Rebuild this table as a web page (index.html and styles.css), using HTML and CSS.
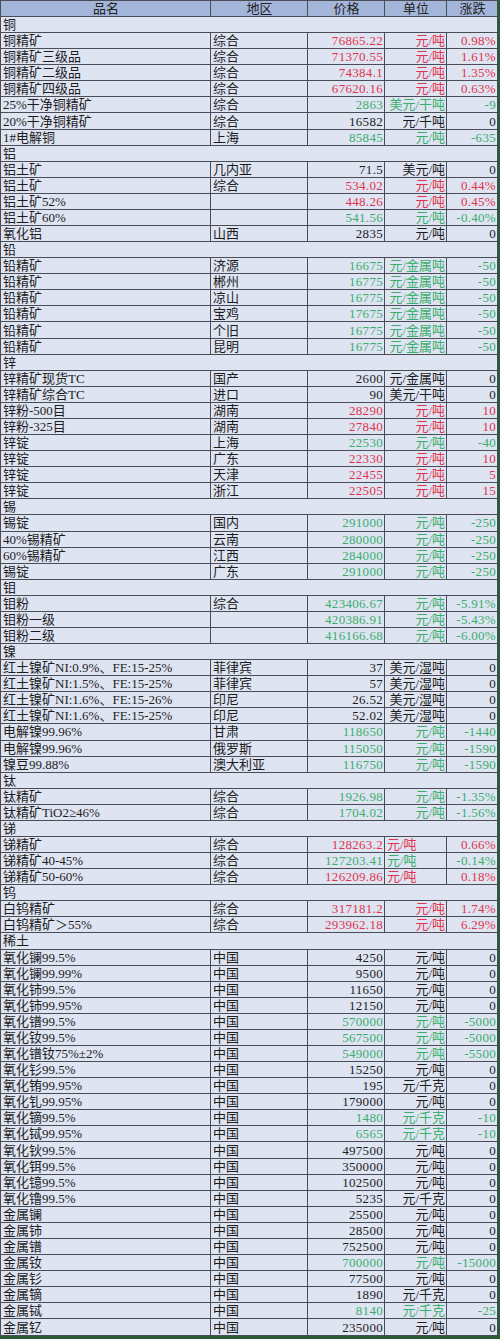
FILE: index.html
```html
<!DOCTYPE html>
<html lang="zh-CN">
<head>
<meta charset="utf-8">
<title>有色金属价格</title>
<link rel="stylesheet" href="styles.css">
</head>
<body>
<div class="sheet">
<table class="grid">
<colgroup><col class="c-name"><col class="c-area"><col class="c-price"><col class="c-unit"><col class="c-chg"></colgroup>
<thead>
<tr class="head"><th>品名</th><th>地区</th><th>价格</th><th>单位</th><th>涨跌</th></tr>
</thead>
<tbody>
<tr class="sec"><td colspan="5">铜</td></tr>
<tr class="up"><td>铜精矿</td><td>综合</td><td class="n">76865.22</td><td class="u">元/吨</td><td class="n">0.98%</td></tr>
<tr class="up"><td>铜精矿三级品</td><td>综合</td><td class="n">71370.55</td><td class="u">元/吨</td><td class="n">1.61%</td></tr>
<tr class="up"><td>铜精矿二级品</td><td>综合</td><td class="n">74384.1</td><td class="u">元/吨</td><td class="n">1.35%</td></tr>
<tr class="up"><td>铜精矿四级品</td><td>综合</td><td class="n">67620.16</td><td class="u">元/吨</td><td class="n">0.63%</td></tr>
<tr class="dn"><td>25%干净铜精矿</td><td>综合</td><td class="n">2863</td><td class="u">美元/干吨</td><td class="n">-9</td></tr>
<tr><td>20%干净铜精矿</td><td>综合</td><td class="n">16582</td><td class="u">元/千吨</td><td class="n">0</td></tr>
<tr class="dn"><td>1#电解铜</td><td>上海</td><td class="n">85845</td><td class="u">元/吨</td><td class="n">-635</td></tr>
<tr class="sec"><td colspan="5">铝</td></tr>
<tr><td>铝土矿</td><td>几内亚</td><td class="n">71.5</td><td class="u">美元/吨</td><td class="n">0</td></tr>
<tr class="up"><td>铝土矿</td><td>综合</td><td class="n">534.02</td><td class="u">元/吨</td><td class="n">0.44%</td></tr>
<tr class="up"><td>铝土矿52%</td><td></td><td class="n">448.26</td><td class="u">元/吨</td><td class="n">0.45%</td></tr>
<tr class="dn"><td>铝土矿60%</td><td></td><td class="n">541.56</td><td class="u">元/吨</td><td class="n">-0.40%</td></tr>
<tr><td>氧化铝</td><td>山西</td><td class="n">2835</td><td class="u">元/吨</td><td class="n">0</td></tr>
<tr class="sec"><td colspan="5">铅</td></tr>
<tr class="dn"><td>铅精矿</td><td>济源</td><td class="n">16675</td><td class="u">元/金属吨</td><td class="n">-50</td></tr>
<tr class="dn"><td>铅精矿</td><td>郴州</td><td class="n">16775</td><td class="u">元/金属吨</td><td class="n">-50</td></tr>
<tr class="dn"><td>铅精矿</td><td>凉山</td><td class="n">16775</td><td class="u">元/金属吨</td><td class="n">-50</td></tr>
<tr class="dn"><td>铅精矿</td><td>宝鸡</td><td class="n">17675</td><td class="u">元/金属吨</td><td class="n">-50</td></tr>
<tr class="dn"><td>铅精矿</td><td>个旧</td><td class="n">16775</td><td class="u">元/金属吨</td><td class="n">-50</td></tr>
<tr class="dn"><td>铅精矿</td><td>昆明</td><td class="n">16775</td><td class="u">元/金属吨</td><td class="n">-50</td></tr>
<tr class="sec"><td colspan="5">锌</td></tr>
<tr><td>锌精矿现货TC</td><td>国产</td><td class="n">2600</td><td class="u">元/金属吨</td><td class="n">0</td></tr>
<tr><td>锌精矿综合TC</td><td>进口</td><td class="n">90</td><td class="u">美元/干吨</td><td class="n">0</td></tr>
<tr class="up"><td>锌粉-500目</td><td>湖南</td><td class="n">28290</td><td class="u">元/吨</td><td class="n">10</td></tr>
<tr class="up"><td>锌粉-325目</td><td>湖南</td><td class="n">27840</td><td class="u">元/吨</td><td class="n">10</td></tr>
<tr class="dn"><td>锌锭</td><td>上海</td><td class="n">22530</td><td class="u">元/吨</td><td class="n">-40</td></tr>
<tr class="up"><td>锌锭</td><td>广东</td><td class="n">22330</td><td class="u">元/吨</td><td class="n">10</td></tr>
<tr class="up"><td>锌锭</td><td>天津</td><td class="n">22455</td><td class="u">元/吨</td><td class="n">5</td></tr>
<tr class="up"><td>锌锭</td><td>浙江</td><td class="n">22505</td><td class="u">元/吨</td><td class="n">15</td></tr>
<tr class="sec"><td colspan="5">锡</td></tr>
<tr class="dn"><td>锡锭</td><td>国内</td><td class="n">291000</td><td class="u">元/吨</td><td class="n">-250</td></tr>
<tr class="dn"><td>40%锡精矿</td><td>云南</td><td class="n">280000</td><td class="u">元/吨</td><td class="n">-250</td></tr>
<tr class="dn"><td>60%锡精矿</td><td>江西</td><td class="n">284000</td><td class="u">元/吨</td><td class="n">-250</td></tr>
<tr class="dn"><td>锡锭</td><td>广东</td><td class="n">291000</td><td class="u">元/吨</td><td class="n">-250</td></tr>
<tr class="sec"><td colspan="5">钼</td></tr>
<tr class="dn"><td>钼粉</td><td>综合</td><td class="n">423406.67</td><td class="u">元/吨</td><td class="n">-5.91%</td></tr>
<tr class="dn"><td>钼粉一级</td><td></td><td class="n">420386.91</td><td class="u">元/吨</td><td class="n">-5.43%</td></tr>
<tr class="dn"><td>钼粉二级</td><td></td><td class="n">416166.68</td><td class="u">元/吨</td><td class="n">-6.00%</td></tr>
<tr class="sec"><td colspan="5">镍</td></tr>
<tr><td>红土镍矿NI:0.9%、FE:15-25%</td><td>菲律宾</td><td class="n">37</td><td class="u">美元/湿吨</td><td class="n">0</td></tr>
<tr><td>红土镍矿NI:1.5%、FE:15-25%</td><td>菲律宾</td><td class="n">57</td><td class="u">美元/湿吨</td><td class="n">0</td></tr>
<tr><td>红土镍矿NI:1.6%、FE:15-26%</td><td>印尼</td><td class="n">26.52</td><td class="u">美元/湿吨</td><td class="n">0</td></tr>
<tr><td>红土镍矿NI:1.6%、FE:15-25%</td><td>印尼</td><td class="n">52.02</td><td class="u">美元/湿吨</td><td class="n">0</td></tr>
<tr class="dn"><td>电解镍99.96%</td><td>甘肃</td><td class="n">118650</td><td class="u">元/吨</td><td class="n">-1440</td></tr>
<tr class="dn"><td>电解镍99.96%</td><td>俄罗斯</td><td class="n">115050</td><td class="u">元/吨</td><td class="n">-1590</td></tr>
<tr class="dn"><td>镍豆99.88%</td><td>澳大利亚</td><td class="n">116750</td><td class="u">元/吨</td><td class="n">-1590</td></tr>
<tr class="sec"><td colspan="5">钛</td></tr>
<tr class="dn"><td>钛精矿</td><td>综合</td><td class="n">1926.98</td><td class="u">元/吨</td><td class="n">-1.35%</td></tr>
<tr class="dn"><td>钛精矿TiO2≥46%</td><td>综合</td><td class="n">1704.02</td><td class="u">元/吨</td><td class="n">-1.56%</td></tr>
<tr class="sec"><td colspan="5">锑</td></tr>
<tr class="up"><td>锑精矿</td><td>综合</td><td class="n">128263.2</td><td class="u left">元/吨</td><td class="n">0.66%</td></tr>
<tr class="dn"><td>锑精矿40-45%</td><td>综合</td><td class="n">127203.41</td><td class="u left">元/吨</td><td class="n">-0.14%</td></tr>
<tr class="up"><td>锑精矿50-60%</td><td>综合</td><td class="n">126209.86</td><td class="u left">元/吨</td><td class="n">0.18%</td></tr>
<tr class="sec"><td colspan="5">钨</td></tr>
<tr class="up"><td>白钨精矿</td><td>综合</td><td class="n">317181.2</td><td class="u">元/吨</td><td class="n">1.74%</td></tr>
<tr class="up"><td>白钨精矿＞55%</td><td>综合</td><td class="n">293962.18</td><td class="u">元/吨</td><td class="n">6.29%</td></tr>
<tr class="sec"><td colspan="5">稀土</td></tr>
<tr><td>氧化镧99.5%</td><td>中国</td><td class="n">4250</td><td class="u">元/吨</td><td class="n">0</td></tr>
<tr><td>氧化镧99.99%</td><td>中国</td><td class="n">9500</td><td class="u">元/吨</td><td class="n">0</td></tr>
<tr><td>氧化铈99.5%</td><td>中国</td><td class="n">11650</td><td class="u">元/吨</td><td class="n">0</td></tr>
<tr><td>氧化铈99.95%</td><td>中国</td><td class="n">12150</td><td class="u">元/吨</td><td class="n">0</td></tr>
<tr class="dn"><td>氧化镨99.5%</td><td>中国</td><td class="n">570000</td><td class="u">元/吨</td><td class="n">-5000</td></tr>
<tr class="dn"><td>氧化钕99.5%</td><td>中国</td><td class="n">567500</td><td class="u">元/吨</td><td class="n">-5000</td></tr>
<tr class="dn"><td>氧化镨钕75%±2%</td><td>中国</td><td class="n">549000</td><td class="u">元/吨</td><td class="n">-5500</td></tr>
<tr><td>氧化钐99.5%</td><td>中国</td><td class="n">15250</td><td class="u">元/吨</td><td class="n">0</td></tr>
<tr><td>氧化铕99.95%</td><td>中国</td><td class="n">195</td><td class="u">元/千克</td><td class="n">0</td></tr>
<tr><td>氧化钆99.95%</td><td>中国</td><td class="n">179000</td><td class="u">元/吨</td><td class="n">0</td></tr>
<tr class="dn"><td>氧化镝99.5%</td><td>中国</td><td class="n">1480</td><td class="u">元/千克</td><td class="n">-10</td></tr>
<tr class="dn"><td>氧化铽99.95%</td><td>中国</td><td class="n">6565</td><td class="u">元/千克</td><td class="n">-10</td></tr>
<tr><td>氧化钬99.5%</td><td>中国</td><td class="n">497500</td><td class="u">元/吨</td><td class="n">0</td></tr>
<tr><td>氧化铒99.5%</td><td>中国</td><td class="n">350000</td><td class="u">元/吨</td><td class="n">0</td></tr>
<tr><td>氧化镱99.5%</td><td>中国</td><td class="n">102500</td><td class="u">元/吨</td><td class="n">0</td></tr>
<tr><td>氧化镥99.5%</td><td>中国</td><td class="n">5235</td><td class="u">元/千克</td><td class="n">0</td></tr>
<tr><td>金属镧</td><td>中国</td><td class="n">25500</td><td class="u">元/吨</td><td class="n">0</td></tr>
<tr><td>金属铈</td><td>中国</td><td class="n">28500</td><td class="u">元/吨</td><td class="n">0</td></tr>
<tr><td>金属镨</td><td>中国</td><td class="n">752500</td><td class="u">元/吨</td><td class="n">0</td></tr>
<tr class="dn"><td>金属钕</td><td>中国</td><td class="n">700000</td><td class="u">元/吨</td><td class="n">-15000</td></tr>
<tr><td>金属钐</td><td>中国</td><td class="n">77500</td><td class="u">元/吨</td><td class="n">0</td></tr>
<tr><td>金属镝</td><td>中国</td><td class="n">1890</td><td class="u">元/千克</td><td class="n">0</td></tr>
<tr class="dn"><td>金属铽</td><td>中国</td><td class="n">8140</td><td class="u">元/千克</td><td class="n">-25</td></tr>
<tr><td>金属钇</td><td>中国</td><td class="n">235000</td><td class="u">元/吨</td><td class="n">0</td></tr>
</tbody>
</table>
</div>
</body>
</html>
```

FILE: styles.css
```css
html, body {
  margin: 0;
  padding: 0;
  background: #ffffff;
}

.sheet {
  width: 497px;
  height: 1336px;
  border-right: 3px solid #2a5a33;
  border-bottom: 3px solid #2a5a33;
  background: #dfe4f2;
}

.grid {
  width: 100%;
  height: 100%;
  border-collapse: collapse;
  table-layout: fixed;
  font: 13px/1 "Liberation Serif", "Noto Sans CJK SC", serif;
  color: #1c1c1c;
}

.c-name { width: 210px; }
.c-area { width: 97px; }
.c-price { width: 77px; }
.c-unit { width: 62px; }
.c-chg { width: 51px; }

.grid th,
.grid td {
  border: 1px solid #4a4d55;
  padding: 0 1px 0 2px;
  white-space: nowrap;
  overflow: hidden;
  vertical-align: middle;
  height: 15px;
  text-align: left;
}

.head th {
  background: #a4b5da;
  font-weight: normal;
  text-align: center;
  color: #222;
}

.grid td.n,
.grid td.u {
  text-align: right;
}

.grid td.u.left {
  text-align: left;
}

.grid td.n {
  letter-spacing: 0.3px;
}

.up td.n,
.up td.u {
  color: #e0344c;
}

.dn td.n,
.dn td.u {
  color: #3aae6c;
}
```
